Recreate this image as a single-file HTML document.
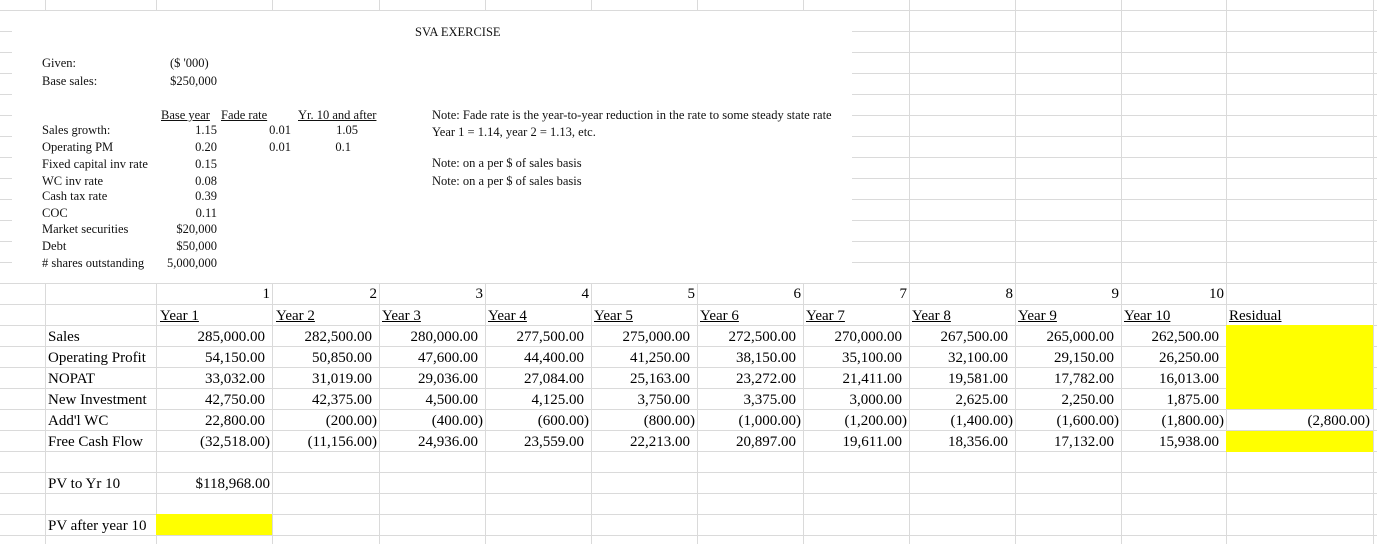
<!DOCTYPE html>
<html><head><meta charset="utf-8">
<style>
html,body{margin:0;padding:0;background:#fff;}
body{width:1377px;height:544px;position:relative;overflow:hidden;font-family:"Liberation Serif",serif;color:#000;}
.h{position:absolute;left:0;width:1377px;height:1px;background:#dadada;}
.v{position:absolute;top:0;width:1px;height:544px;background:#dadada;}
.img{position:absolute;left:12px;top:11px;width:840px;height:272px;background:#fff;}
.s{position:absolute;font-size:12.5px;line-height:12px;color:#111;white-space:nowrap;}
.r{text-align:right;}
.u{text-decoration:underline;}
.t{position:absolute;font-size:15px;line-height:21px;height:21px;white-space:nowrap;}
.y{position:absolute;background:#ffff00;}
</style></head><body>
<div class="h" style="top:10px"></div><div class="h" style="top:31px"></div><div class="h" style="top:52px"></div>
<div class="h" style="top:73px"></div><div class="h" style="top:94px"></div><div class="h" style="top:115px"></div>
<div class="h" style="top:136px"></div><div class="h" style="top:157px"></div><div class="h" style="top:178px"></div>
<div class="h" style="top:199px"></div><div class="h" style="top:220px"></div><div class="h" style="top:241px"></div>
<div class="h" style="top:262px"></div><div class="h" style="top:283px"></div><div class="h" style="top:304px"></div>
<div class="h" style="top:325px"></div><div class="h" style="top:346px"></div><div class="h" style="top:367px"></div>
<div class="h" style="top:388px"></div><div class="h" style="top:409px"></div><div class="h" style="top:430px"></div>
<div class="h" style="top:451px"></div><div class="h" style="top:472px"></div><div class="h" style="top:493px"></div>
<div class="h" style="top:514px"></div><div class="h" style="top:535px"></div>
<div class="v" style="left:45px"></div><div class="v" style="left:156px"></div><div class="v" style="left:272px"></div>
<div class="v" style="left:379px"></div><div class="v" style="left:485px"></div><div class="v" style="left:591px"></div>
<div class="v" style="left:697px"></div><div class="v" style="left:803px"></div><div class="v" style="left:909px"></div>
<div class="v" style="left:1015px"></div><div class="v" style="left:1121px"></div><div class="v" style="left:1226px"></div>
<div class="v" style="left:1373px"></div>

<div class="y" style="left:1226px;top:325px;width:147px;height:84px"></div>
<div class="y" style="left:1226px;top:431px;width:147px;height:21px"></div>
<div class="y" style="left:156px;top:514px;width:116px;height:21px"></div>

<div class="img"></div>
<div class="s" style="left:415px;top:26px">SVA EXERCISE</div>
<div class="s" style="left:42px;top:57px">Given:</div>
<div class="s" style="left:170px;top:57px">($ '000)</div>
<div class="s" style="left:42px;top:75px">Base sales:</div>
<div class="s r" style="left:140px;width:77px;top:75px">$250,000</div>

<div class="s u" style="left:161px;top:109px">Base year</div>
<div class="s u" style="left:221px;top:109px">Fade rate</div>
<div class="s u" style="left:298px;top:109px">Yr. 10 and after</div>

<div class="s" style="left:42px;top:124px">Sales growth:</div>
<div class="s" style="left:42px;top:141px">Operating PM</div>
<div class="s" style="left:42px;top:158px">Fixed capital inv rate</div>
<div class="s" style="left:42px;top:175px">WC inv rate</div>
<div class="s" style="left:42px;top:190px">Cash tax rate</div>
<div class="s" style="left:42px;top:207px">COC</div>
<div class="s" style="left:42px;top:223px">Market securities</div>
<div class="s" style="left:42px;top:240px">Debt</div>
<div class="s" style="left:42px;top:257px"># shares outstanding</div>

<div class="s r" style="left:140px;width:77px;top:124px">1.15</div>
<div class="s r" style="left:140px;width:77px;top:141px">0.20</div>
<div class="s r" style="left:140px;width:77px;top:158px">0.15</div>
<div class="s r" style="left:140px;width:77px;top:175px">0.08</div>
<div class="s r" style="left:140px;width:77px;top:190px">0.39</div>
<div class="s r" style="left:140px;width:77px;top:207px">0.11</div>
<div class="s r" style="left:140px;width:77px;top:223px">$20,000</div>
<div class="s r" style="left:140px;width:77px;top:240px">$50,000</div>
<div class="s r" style="left:140px;width:77px;top:257px">5,000,000</div>

<div class="s r" style="left:240px;width:51px;top:124px">0.01</div>
<div class="s r" style="left:240px;width:51px;top:141px">0.01</div>
<div class="s r" style="left:300px;width:58px;top:124px">1.05</div>
<div class="s r" style="left:300px;width:51px;top:141px">0.1</div>

<div class="s" style="left:432px;top:109px">Note: Fade rate is the year-to-year reduction in the rate to some steady state rate</div>
<div class="s" style="left:432px;top:126px">Year 1 = 1.14, year 2 = 1.13, etc.</div>
<div class="s" style="left:432px;top:157px">Note: on a per $ of sales basis</div>
<div class="s" style="left:432px;top:175px">Note: on a per $ of sales basis</div>

<div id="tbl"></div>
<div class="t r" style="left:156px;width:114px;top:284px">1</div>
<div class="t r" style="left:272px;width:105px;top:284px">2</div>
<div class="t r" style="left:379px;width:104px;top:284px">3</div>
<div class="t r" style="left:485px;width:104px;top:284px">4</div>
<div class="t r" style="left:591px;width:104px;top:284px">5</div>
<div class="t r" style="left:697px;width:104px;top:284px">6</div>
<div class="t r" style="left:803px;width:104px;top:284px">7</div>
<div class="t r" style="left:909px;width:104px;top:284px">8</div>
<div class="t r" style="left:1015px;width:104px;top:284px">9</div>
<div class="t r" style="left:1121px;width:103px;top:284px">10</div>

<div class="t u" style="left:160px;top:306px">Year 1</div>
<div class="t u" style="left:276px;top:306px">Year 2</div>
<div class="t u" style="left:382px;top:306px">Year 3</div>
<div class="t u" style="left:488px;top:306px">Year 4</div>
<div class="t u" style="left:594px;top:306px">Year 5</div>
<div class="t u" style="left:700px;top:306px">Year 6</div>
<div class="t u" style="left:806px;top:306px">Year 7</div>
<div class="t u" style="left:912px;top:306px">Year 8</div>
<div class="t u" style="left:1018px;top:306px">Year 9</div>
<div class="t u" style="left:1124px;top:306px">Year 10</div>
<div class="t u" style="left:1229px;top:306px">Residual</div>

<div class="t" style="left:48px;top:327px">Sales</div>
<div class="t" style="left:48px;top:348px">Operating Profit</div>
<div class="t" style="left:48px;top:369px">NOPAT</div>
<div class="t" style="left:48px;top:390px">New Investment</div>
<div class="t" style="left:48px;top:411px">Add'l WC</div>
<div class="t" style="left:48px;top:432px">Free Cash Flow</div>
<div class="t" style="left:48px;top:474px">PV to Yr 10</div>
<div class="t" style="left:48px;top:516px">PV after year 10</div>
<div class="t r" style="left:156px;width:114px;top:474px">$118,968.00</div>

<script>
(function(){
var rights=[270,377,483,589,695,801,907,1013,1119,1224];
var data=[
["285,000.00","282,500.00","280,000.00","277,500.00","275,000.00","272,500.00","270,000.00","267,500.00","265,000.00","262,500.00"],
["54,150.00","50,850.00","47,600.00","44,400.00","41,250.00","38,150.00","35,100.00","32,100.00","29,150.00","26,250.00"],
["33,032.00","31,019.00","29,036.00","27,084.00","25,163.00","23,272.00","21,411.00","19,581.00","17,782.00","16,013.00"],
["42,750.00","42,375.00","4,500.00","4,125.00","3,750.00","3,375.00","3,000.00","2,625.00","2,250.00","1,875.00"],
["22,800.00","(200.00)","(400.00)","(600.00)","(800.00)","(1,000.00)","(1,200.00)","(1,400.00)","(1,600.00)","(1,800.00)"],
["(32,518.00)","(11,156.00)","24,936.00","23,559.00","22,213.00","20,897.00","19,611.00","18,356.00","17,132.00","15,938.00"]];
var h="";
for(var r=0;r<data.length;r++){for(var c=0;c<10;c++){var v=data[r][c];var neg=v.charAt(0)=="(";
var right=rights[c]-(neg?0:5);
h+='<div class="t r" style="left:'+(right-130)+'px;width:130px;top:'+(327+21*r)+'px">'+v+'</div>';}}
h+='<div class="t r" style="left:1240px;width:130px;top:411px">(2,800.00)</div>';
document.getElementById("tbl").innerHTML=h;})();
</script>
</body></html>
